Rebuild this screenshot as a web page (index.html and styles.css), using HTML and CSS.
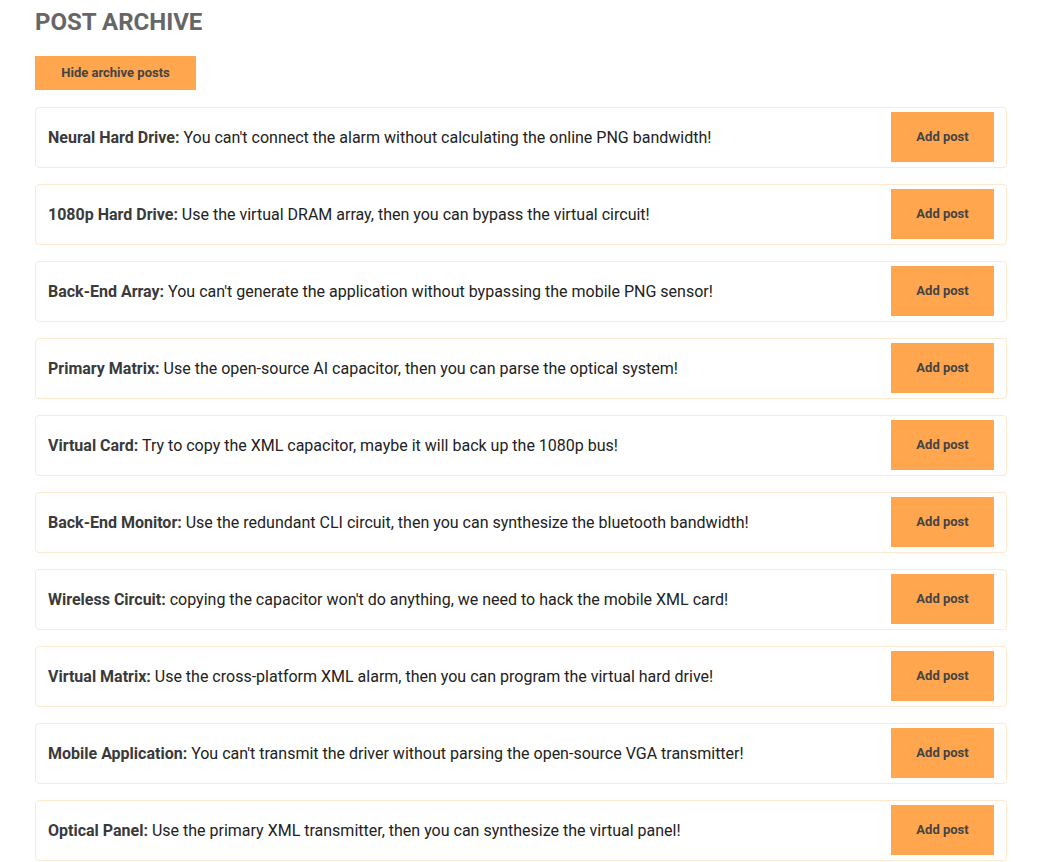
FILE: index.html
```html
<!DOCTYPE html>
<html>
<head>
<meta charset="utf-8">
<link rel="stylesheet" href="styles.css">
</head>
<body>
<div class="page">
  <h1 class="title">POST ARCHIVE</h1>
  <button class="btn btn-hide">Hide archive posts</button>
  <ul class="posts">
    <li class="post"><p class="post-text"><b>Neural Hard Drive:</b> You can't connect the alarm without calculating the online PNG bandwidth!</p><button class="btn btn-add">Add post</button></li>
    <li class="post"><p class="post-text"><b>1080p Hard Drive:</b> Use the virtual DRAM array, then you can bypass the virtual circuit!</p><button class="btn btn-add">Add post</button></li>
    <li class="post"><p class="post-text"><b>Back-End Array:</b> You can't generate the application without bypassing the mobile PNG sensor!</p><button class="btn btn-add">Add post</button></li>
    <li class="post"><p class="post-text"><b>Primary Matrix:</b> Use the open-source AI capacitor, then you can parse the optical system!</p><button class="btn btn-add">Add post</button></li>
    <li class="post"><p class="post-text"><b>Virtual Card:</b> Try to copy the XML capacitor, maybe it will back up the 1080p bus!</p><button class="btn btn-add">Add post</button></li>
    <li class="post"><p class="post-text"><b>Back-End Monitor:</b> Use the redundant CLI circuit, then you can synthesize the bluetooth bandwidth!</p><button class="btn btn-add">Add post</button></li>
    <li class="post"><p class="post-text"><b>Wireless Circuit:</b> copying the capacitor won't do anything, we need to hack the mobile XML card!</p><button class="btn btn-add">Add post</button></li>
    <li class="post"><p class="post-text"><b>Virtual Matrix:</b> Use the cross-platform XML alarm, then you can program the virtual hard drive!</p><button class="btn btn-add">Add post</button></li>
    <li class="post"><p class="post-text"><b>Mobile Application:</b> You can't transmit the driver without parsing the open-source VGA transmitter!</p><button class="btn btn-add">Add post</button></li>
    <li class="post"><p class="post-text"><b>Optical Panel:</b> Use the primary XML transmitter, then you can synthesize the virtual panel!</p><button class="btn btn-add">Add post</button></li>
  </ul>
</div>
</body>
</html>
```
FILE: styles.css
```css
* { box-sizing: border-box; }
body {
  margin: 0;
  font-family: Roboto, "Liberation Sans", sans-serif;
  color: #222;
  background: #fff;
}
.page {
  padding: 8px 31px 0 35px;
}
.title {
  margin: 0;
  font-size: 24px;
  line-height: 28px;
  font-weight: 700;
  color: #666;
}
.btn {
  border: none;
  background: #ffa64f;
  color: #444;
  font-family: Roboto, "Liberation Sans", sans-serif;
  font-size: 13px;
  font-weight: 700;
  padding: 0 25px 1px;
  cursor: pointer;
}
.btn-hide {
  display: block;
  margin-top: 20px;
  height: 34px;
  width: 161px;
}
.posts {
  list-style: none;
  margin: 17px 0 0;
  padding: 0;
  display: flex;
  flex-direction: column;
  gap: 16px;
}
.post {
  display: flex;
  align-items: flex-start;
  justify-content: space-between;
  height: 61px;
  border: 1px solid #fde8d0;
  border-radius: 4px;
  padding: 4px 12px 5px 12px;
}
.post-text {
  margin: 0;
  align-self: center;
  font-size: 16px;
  color: #222;
}
.post-text b {
  color: #3a3a3a;
}
.btn-add {
  height: 50px;
  width: 103px;
}
```
